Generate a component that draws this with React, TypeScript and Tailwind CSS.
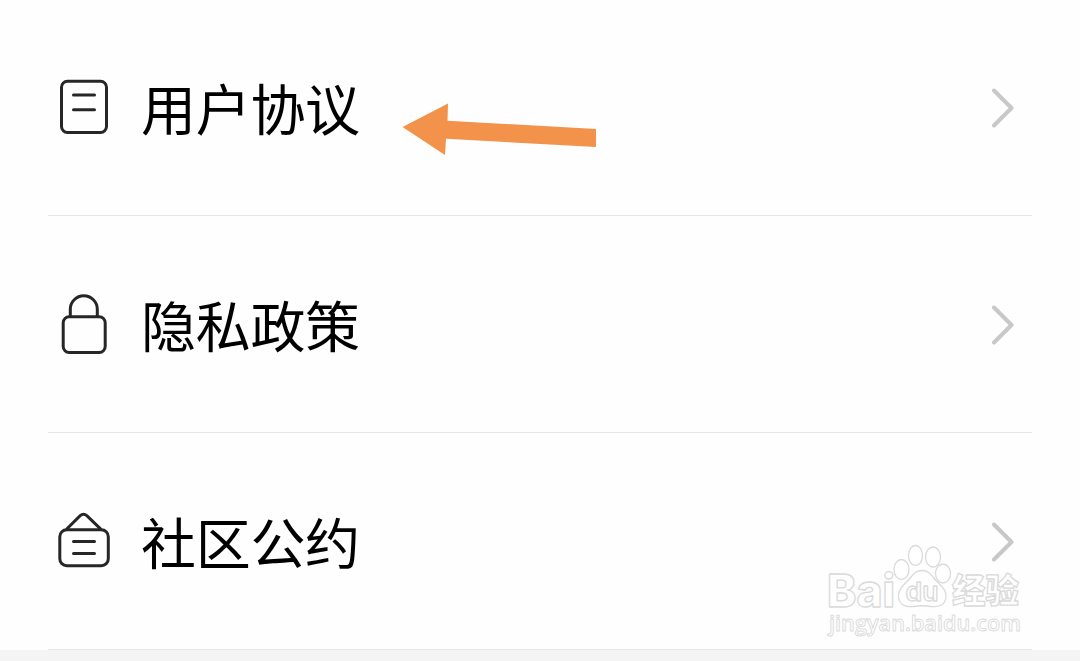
import React from 'react';

const AgreementIcon: React.FC = () => (
  <svg width="60" height="64" viewBox="0 0 60 64" fill="none" stroke="#262626" strokeWidth="3" strokeLinecap="round">
    <rect x="7.5" y="6.2" width="45" height="51.3" rx="6" />
    <path d="M19.5 20H40.5M19.5 34.8H40.5" />
  </svg>
);

const PrivacyIcon: React.FC = () => (
  <svg width="60" height="64" viewBox="0 0 60 64" fill="none" stroke="#262626" strokeWidth="3">
    <rect x="9.2" y="24.8" width="42" height="35.7" rx="6" />
    <path d="M16.3 24.8V17.3a13.5 13.5 0 0 1 27 0V24.8" />
  </svg>
);

const CommunityIcon: React.FC = () => (
  <svg width="60" height="64" viewBox="0 0 60 64" fill="none" stroke="#262626" strokeWidth="3" strokeLinecap="round">
    <rect x="5.8" y="20.7" width="48.5" height="36" rx="7" />
    <path d="M13 19.8L26.2 6.7Q29.5 3.8 32.8 6.7L46.5 19.8" />
    <path d="M19.5 32.6H40.5M19.5 44.6H40.5" />
  </svg>
);

const ChevronIcon: React.FC = () => (
  <svg width="24" height="42" viewBox="0 0 24 42" fill="none" stroke="#c8c8c8" strokeWidth="4" strokeLinecap="round" strokeLinejoin="round">
    <path d="M3 4.5L20.5 22L3 39.5" />
  </svg>
);

// Orange pointer next to the first entry
const PointerArrow: React.FC = () => (
  <svg className="absolute left-[400px] top-[100px]" width="200" height="60" viewBox="0 0 200 60">
    <path d="M2.5 27L48 3.5L47.5 20.7L196 29V47L46 38.7L45 55Z" fill="#f3924b" />
  </svg>
);

const Watermark: React.FC = () => (
  <svg
    className="absolute left-[820px] top-[540px]"
    width="212"
    height="102"
    viewBox="0 0 212 102"
    fill="#ffffff"
    stroke="#dadada"
    strokeWidth="1.3"
    strokeLinejoin="round"
  >
    <text x="7" y="66.5" fontSize="45" fontFamily="Inter, sans-serif" fontWeight="800" textLength="68" lengthAdjust="spacingAndGlyphs">Bai</text>
    <ellipse cx="81.5" cy="29.5" rx="7.5" ry="10" />
    <ellipse cx="95.5" cy="15.5" rx="7" ry="10" />
    <ellipse cx="113" cy="17" rx="7.5" ry="10" />
    <ellipse cx="123" cy="33.5" rx="7.5" ry="9.5" />
    <path d="M102 30.5C94 30.5 92 37 86 42.5C80 48 78 52 78.5 57C79.5 65 86 67.5 93 66.5C99 65.5 105 65.5 111 66.5C119 67.5 125.5 65 126 56.5C126.5 51 123 47 118 42.5C112 37 110 30.5 102 30.5Z" />
    <text x="85.5" y="61" fontSize="26" fontFamily="Inter, sans-serif" fontWeight="600" textLength="33" lengthAdjust="spacingAndGlyphs">du</text>
    <text x="132" y="63" fontSize="34" fontFamily="'Noto Sans CJK SC', sans-serif" fontWeight="900" textLength="67" lengthAdjust="spacingAndGlyphs">经验</text>
    <text x="9" y="91" fontSize="22" fontFamily="'Open Sans', sans-serif" fontWeight="600" textLength="192" lengthAdjust="spacingAndGlyphs" strokeWidth="0.9">jingyan.baidu.com</text>
  </svg>
);

const menuItems = [
  { label: '用户协议', icon: AgreementIcon },
  { label: '隐私政策', icon: PrivacyIcon },
  { label: '社区公约', icon: CommunityIcon },
];

export default function App() {
  return (
    <div className="relative h-[661px] w-[1080px] overflow-hidden bg-[#fefefe] font-['Noto_Sans_CJK_SC',sans-serif]">
      <ul className="-mt-px px-12">
        {menuItems.map(({ label, icon: Icon }) => (
          <li key={label} className="flex h-[217px] items-center border-b border-[#e6e6e6] pl-1.5 pr-[17px]">
            <Icon />
            <span className="ml-[27px] pb-px text-[55px] leading-none tracking-[-0.3px] text-black">{label}</span>
            <span className="ml-auto">
              <ChevronIcon />
            </span>
          </li>
        ))}
      </ul>
      <div className="h-[11px] bg-[#f4f4f4]" />

      <PointerArrow />
      <Watermark />
    </div>
  );
}
